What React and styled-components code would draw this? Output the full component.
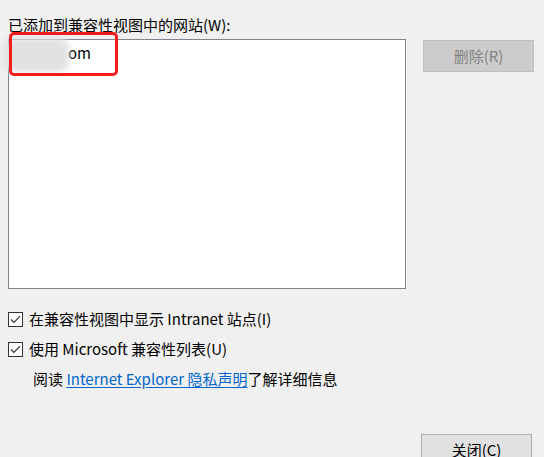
import React from 'react';
import styled, { createGlobalStyle } from 'styled-components';

const GlobalStyle = createGlobalStyle`
  html, body {
    margin: 0;
    padding: 0;
    background: #f0f0f0;
  }
`;

const Dialog = styled.div`
  position: relative;
  width: 544px;
  height: 457px;
  overflow: hidden;
  box-sizing: border-box;
  padding: 15px 10px 0 8px;
  background: #f0f0f0;
  font-family: "Noto Sans CJK SC", "Noto Sans", sans-serif;
  font-size: 15px;
  color: #000;
`;

const Label = styled.div`
  line-height: 20px;
  height: 20px;
  margin-bottom: 4px;
`;

const TopRow = styled.div`
  display: flex;
  align-items: flex-start;
  gap: 17px;
`;

const SiteList = styled.div`
  position: relative;
  width: 398px;
  height: 250px;
  box-sizing: border-box;
  border: 1px solid #82838f;
  background: #fff;
`;

const SiteItem = styled.div`
  padding: 3px 0 0 59px;
  line-height: 20px;
`;

const Smudge = styled.div`
  position: absolute;
  left: -6px;
  top: -2px;
  width: 66px;
  height: 34px;
  border-radius: 10px;
  background: #e2e2e2;
  filter: blur(3px);
`;

const Highlight = styled.div`
  position: absolute;
  left: 0px;
  top: -8px;
  width: 109px;
  height: 44px;
  box-sizing: border-box;
  border: 3px solid #f51c1c;
  border-radius: 5px;
`;

const Button = styled.button`
  width: 111px;
  height: 32px;
  box-sizing: border-box;
  margin-top: ${({ $offset }) => $offset || 0}px;
  border: 1px solid ${({ disabled }) => (disabled ? '#bfbfbf' : '#adadad')};
  background: ${({ disabled }) => (disabled ? '#cccccc' : '#e1e1e1')};
  color: ${({ disabled }) => (disabled ? '#838383' : '#000')};
  font-family: inherit;
  font-size: 15px;
  padding: 0;
  line-height: 30px;
`;

const Options = styled.div`
  display: flex;
  flex-direction: column;
  margin-top: 15px;
`;

const CheckRow = styled.label`
  display: flex;
  align-items: center;
  gap: 6px;
  height: 30px;
  line-height: 20px;
`;

const Box = styled.span`
  width: 15px;
  height: 15px;
  box-sizing: border-box;
  border: 1px solid #333;
  background: #fff;
  display: flex;
  align-items: center;
  justify-content: center;
`;

const Info = styled.div`
  padding-left: 25px;
  height: 30px;
  line-height: 30px;
`;

const Link = styled.a`
  color: #0066cc;
  text-decoration: underline;
  text-underline-offset: 2px;
`;

const Footer = styled.div`
  display: flex;
  justify-content: flex-end;
  padding-right: 2px;
  margin-top: 40px;
`;

function Check({ children }) {
  return (
    <CheckRow>
      <Box>
        <svg width="11" height="9" viewBox="0 0 11 9">
          <path d="M1 4.5 L4 7.5 L10 1.2" fill="none" stroke="#333" strokeWidth="1.2" />
        </svg>
      </Box>
      <span>{children}</span>
    </CheckRow>
  );
}

export default function App() {
  return (
    <>
      <GlobalStyle />
      <Dialog>
        <Label>已添加到兼容性视图中的网站(W):</Label>
        <TopRow>
          <SiteList>
            <Smudge />
            <SiteItem>om</SiteItem>
            <Highlight />
          </SiteList>
          <Button disabled $offset={1}>删除(R)</Button>
        </TopRow>
        <Options>
          <Check>在兼容性视图中显示 Intranet 站点(I)</Check>
          <Check>使用 Microsoft 兼容性列表(U)</Check>
          <Info>
            阅读 <Link href="#">Internet Explorer 隐私声明</Link>了解详细信息
          </Info>
        </Options>
        <Footer>
          <Button>关闭(C)</Button>
        </Footer>
      </Dialog>
    </>
  );
}
